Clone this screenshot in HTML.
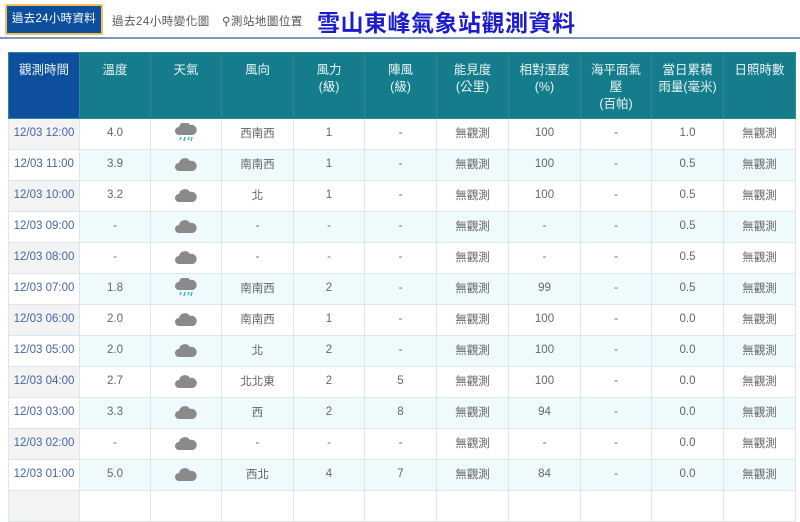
<!DOCTYPE html>
<html><head><meta charset="utf-8"><style>
body{margin:0;width:800px;height:497px;overflow:hidden;background:#fff;font-family:"Liberation Sans","Noto Sans CJK TC",sans-serif;}
.tab{position:absolute;left:5px;top:4px;width:98px;height:31px;background:#0d4f9c;border:2px solid #f1c15a;border-radius:2px;box-sizing:border-box;color:#fff;font-size:11.5px;line-height:27px;text-align:center;letter-spacing:0.3px}
.t2{position:absolute;top:13px;font-size:11.5px;color:#555;letter-spacing:0.5px}
.title{position:absolute;left:317px;top:4px;font-size:23px;font-weight:bold;color:#1c1ccf;font-family:"Noto Sans CJK TC",sans-serif;letter-spacing:0.5px}
.line{position:absolute;left:0;top:37px;width:800px;height:2px;background:#7d98b8}
table{position:absolute;left:8px;top:52px;border-collapse:collapse;table-layout:fixed;width:787px}
th{background:#157c8b;color:#e8f4f6;font-weight:normal;font-size:12.5px;vertical-align:top;padding:9px 0 0;height:66px;border:1px solid #2a8a98;line-height:17px;box-sizing:border-box}
th.f{background:#0d4f9c}
td{height:31px;border:1px solid #dde6ea;font-size:11.5px;color:#666;text-align:center;padding:0 0 2px;box-sizing:border-box}
td.f{color:#4565a4;background:#f3f3f3}
tr.e td{background:#eefafc}
tr.e td.f{background:#fff}
svg{display:block;margin:0 auto}
</style></head><body>
<div class="tab">過去24小時資料</div>
<div class="t2" style="left:112px">過去24小時變化圖</div>
<div class="t2" style="left:222px">⚲測站地圖位置</div>
<div class="title">雪山東峰氣象站觀測資料</div>
<div class="line"></div>
<table>
<colgroup><col style="width:71px"><col style="width:71px"><col style="width:71px"><col style="width:72px"><col style="width:71px"><col style="width:72px"><col style="width:72px"><col style="width:72px"><col style="width:71px"><col style="width:72px"><col style="width:72px"></colgroup>
<tr><th class="f">觀測時間</th><th>溫度</th><th>天氣</th><th>風向</th><th>風力<br>(級)</th><th>陣風<br>(級)</th><th>能見度<br>(公里)</th><th>相對溼度<br>(%)</th><th>海平面氣<br>壓<br>(百帕)</th><th>當日累積<br>雨量(毫米)</th><th>日照時數</th></tr>
<tbody id="b"></tbody>
</table>
<script>
var c='<svg width="22" height="16" viewBox="0 0 22 16"><path d="M4 15a4 4 0 0 1 0-8 6 6 0 0 1 11-2 5 5 0 0 1 3 10z" fill="#8a8a8a"/></svg>';
var r='<svg width="22" height="20" viewBox="0 0 22 20"><path d="M4 12a4 4 0 0 1 0-8 6 6 0 0 1 11-2 5 5 0 0 1 3 10z" fill="#8a8a8a"/><path d="M6 14l-1 3M10 14l-1 4M14 14l-1 3M17 14l-1 4" stroke="#2bb6c8" stroke-width="1.4"/></svg>';
var d=[["12:00","4.0",r,"西南西","1","-","100","1.0"],["11:00","3.9",c,"南南西","1","-","100","0.5"],["10:00","3.2",c,"北","1","-","100","0.5"],["09:00","-",c,"-","-","-","-","0.5"],["08:00","-",c,"-","-","-","-","0.5"],["07:00","1.8",r,"南南西","2","-","99","0.5"],["06:00","2.0",c,"南南西","1","-","100","0.0"],["05:00","2.0",c,"北","2","-","100","0.0"],["04:00","2.7",c,"北北東","2","5","100","0.0"],["03:00","3.3",c,"西","2","8","94","0.0"],["02:00","-",c,"-","-","-","-","0.0"],["01:00","5.0",c,"西北","4","7","84","0.0"],["00:00","","","","","","",""]];
var h='';d.forEach(function(x,i){h+='<tr class="'+(i%2?'e':'')+'"><td class="f">'+(i<12?'12/03 '+x[0]:'')+'</td><td>'+x[1]+'</td><td>'+x[2]+'</td><td>'+x[3]+'</td><td>'+x[4]+'</td><td>'+x[5]+'</td><td>'+(i<12?'無觀測':'')+'</td><td>'+x[6]+'</td><td>'+(i<12?'-':'')+'</td><td>'+x[7]+'</td><td>'+(i<12?'無觀測':'')+'</td></tr>';});
document.getElementById('b').innerHTML=h;
</script>
</body></html>
